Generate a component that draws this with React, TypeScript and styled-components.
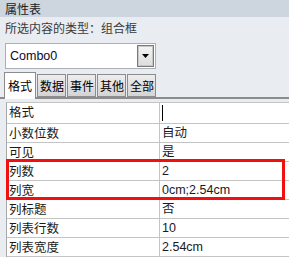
import React from "react";
import styled, {createGlobalStyle} from "styled-components";

const GlobalStyle = createGlobalStyle`
  html, body {
    margin: 0;
    padding: 0;
    width: 289px;
    height: 257px;
    overflow: hidden;
    background: #e9ecf1;
  }
  * {
    box-sizing: border-box;
  }
`

const rows = [
    {name: "格式", value: "", caret: true},
    {name: "小数位数", value: "自动"},
    {name: "可见", value: "是"},
    {name: "列数", value: "2"},
    {name: "列宽", value: "0cm;2.54cm"},
    {name: "列标题", value: "否"},
    {name: "列表行数", value: "10"},
    {name: "列表宽度", value: "2.54cm"},
]

const tabs = ["格式", "数据", "事件", "其他", "全部"]

export default function App() {
    return <Sheet>
        <GlobalStyle/>
        <TitleBar>属性表</TitleBar>
        <Subtitle>所选内容的类型：组合框</Subtitle>
        <Combo>
            <ComboText>Combo0</ComboText>
            <ComboButton>
                <svg width="7" height="4" viewBox="0 0 7 4">
                    <path d="M0 0h7L3.5 4z" fill="#000"/>
                </svg>
            </ComboButton>
        </Combo>
        <TabBar>
            {tabs.map((t, i) => <Tab key={t} active={i === 0}>{t}</Tab>)}
        </TabBar>
        <Table>
            {rows.map((r, i) =>
                <Row key={r.name} first={i === 0}>
                    <NameCell>{r.name}</NameCell>
                    <ValueCell>{r.caret ? <Caret/> : r.value}</ValueCell>
                </Row>
            )}
            <Highlight/>
        </Table>
    </Sheet>
}

const Sheet = styled.div`
  width: 289px;
  height: 257px;
  background: #e9ecf1;
  font-family: "Noto Sans CJK SC", "Liberation Sans", sans-serif;
  font-size: 12px;
  color: #1a1a1a;
  display: flex;
  flex-direction: column;
  overflow: hidden;
`

const TitleBar = styled.div`
  height: 17px;
  background: #cdd5df;
  padding-left: 5px;
  line-height: 17px;
  color: #222;
`

const Subtitle = styled.div`
  height: 19px;
  padding: 1px 0 0 5px;
  line-height: 19px;
  color: #3a3a3a;
`

const Combo = styled.div`
  margin: 7px 0 0 5px;
  width: 151px;
  height: 26px;
  background: #fff;
  border: 1px solid #a9b0b8;
  display: flex;
  align-items: center;
  justify-content: space-between;
  padding: 0 1px 0 4px;
`

const ComboText = styled.span`
  font-family: "Liberation Sans", sans-serif;
  font-size: 12.5px;
  color: #0a0a30;
`

const ComboButton = styled.div`
  width: 17px;
  height: 22px;
  border: 1px solid #7a7a7a;
  outline: 1px solid #c8c8c8;
  outline-offset: -2px;
  background: linear-gradient(#f4f4f4, #dcdcdc);
  display: flex;
  align-items: center;
  justify-content: center;
`

const TabBar = styled.div`
  margin-top: 3px;
  height: 27px;
  padding-left: 4px;
  display: flex;
  align-items: flex-end;
  border-bottom: 2px solid #8c8c8c;
`

const Tab = styled.div`
  height: ${props => props.active ? "27px" : "23px"};
  margin-bottom: ${props => props.active ? "-2px" : "0"};
  padding: ${props => props.active ? "3px 3px 0 3px" : "1px 1px 0 2px"};
  background: ${props => props.active ? "#fff" : "linear-gradient(#ededed, #d4d4d4)"};
  border: 1px solid #8c8c8c;
  border-bottom: ${props => props.active ? "none" : "1px solid #8c8c8c"};
  margin-right: 1px;
  font-size: 12px;
  line-height: 20px;
  color: #000;
  position: relative;
  z-index: ${props => props.active ? 1 : 0};
`

const Table = styled.div`
  position: relative;
  margin: 3px 0 0 6px;
  border-left: 1px solid #a8a8a8;
  border-top: 1px solid #c4c4c4;
  background: #fff;
  flex: 1;
`

const Row = styled.div`
  display: grid;
  grid-template-columns: 153px 1fr;
  height: ${props => props.first ? "21px" : "19px"};
  border-bottom: 1px solid #c4c4c4;
`

const NameCell = styled.div`
  padding-left: 2px;
  line-height: 18px;
  font-size: 12.5px;
  border-right: 1px solid #c4c4c4;
  white-space: nowrap;
`

const ValueCell = styled.div`
  padding-left: 2px;
  line-height: 18px;
  font-family: "Liberation Sans", "Noto Sans CJK SC", sans-serif;
  font-size: 12.5px;
  display: flex;
  align-items: center;
  white-space: nowrap;
`

const Caret = styled.span`
  width: 1px;
  height: 16px;
  background: #000;
`

const Highlight = styled.div`
  position: absolute;
  left: -1px;
  top: 56px;
  width: 279px;
  height: 41px;
  border: 3px solid #f01010;
  pointer-events: none;
`
